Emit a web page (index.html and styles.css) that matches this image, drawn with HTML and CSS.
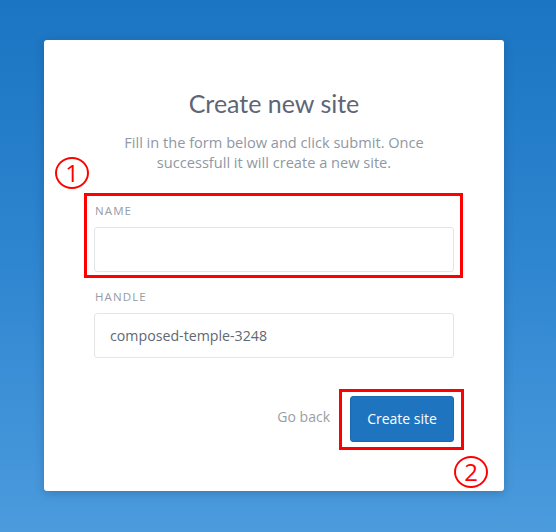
FILE: index.html
```html
<!DOCTYPE html>
<html lang="en">
<head>
<meta charset="utf-8">
<title>Create new site</title>
<link rel="stylesheet" href="styles.css">
</head>
<body>
<div class="page">
  <div class="card">
    <h1 class="title">Create new site</h1>
    <p class="intro">Fill in the form below and click submit. Once<br>successfull it will create a new site.</p>
    <div class="field field-name">
      <label class="label">NAME</label>
      <div class="input"></div>
      <span class="mark mark-name"></span>
      <span class="badge badge-1">1</span>
    </div>
    <div class="field">
      <label class="label">HANDLE</label>
      <div class="input">composed-temple-3248</div>
    </div>
    <div class="actions">
      <span class="back">Go back</span>
      <span class="submit-wrap">
        <span class="btn">Create site</span>
        <span class="mark mark-btn"></span>
        <span class="badge badge-2">2</span>
      </span>
    </div>
  </div>
</div>
</body>
</html>
```
FILE: styles.css
```css
html, body {
  margin: 0;
  padding: 0;
}
body {
  width: 556px;
  height: 532px;
  background: linear-gradient(180deg, #1b75c2 0%, #2f86d0 50%, #4b9bdd 100%);
  font-family: "Open Sans", "Liberation Sans", sans-serif;
  overflow: hidden;
}
.page {
  padding: 40px 52px 0 44px;
}
.card {
  width: 460px;
  height: 451px;
  box-sizing: border-box;
  background: #fff;
  border-radius: 3px;
  box-shadow: 0 2px 10px rgba(10, 40, 80, 0.25);
  padding: 48px 50px 0 50px;
}
.title {
  margin: 0;
  font-family: "Lato", "Open Sans", sans-serif;
  font-weight: 400;
  font-size: 25px;
  line-height: 30px;
  color: #5d6675;
  text-align: center;
}
.intro {
  margin: 14px -10px 0 -10px;
  font-size: 14.6px;
  line-height: 20px;
  color: #8f98a3;
  text-align: center;
}
.field {
  position: relative;
}
.field-name {
  margin-top: 31px;
}
.field + .field {
  margin-top: 17px;
}
.label {
  display: block;
  font-size: 11.5px;
  line-height: 16px;
  letter-spacing: 1.1px;
  color: #959ca6;
  padding-left: 1px;
}
.input {
  margin-top: 8px;
  height: 45px;
  box-sizing: border-box;
  border: 1px solid #e3e5e8;
  border-radius: 3px;
  padding: 0 15px;
  font-size: 14.2px;
  line-height: 43px;
  color: #5f6874;
}
.actions {
  margin-top: 38px;
  display: flex;
  justify-content: flex-end;
  align-items: center;
  gap: 20px;
}
.back {
  font-size: 14px;
  color: #9a9ea4;
  margin-bottom: 6px;
}
.submit-wrap {
  position: relative;
  display: block;
}
.btn {
  display: block;
  width: 104px;
  height: 46px;
  box-sizing: border-box;
  background: #1f74bf;
  border: 1px solid #1b6aae;
  border-radius: 3px;
  color: #fff;
  font-size: 14px;
  line-height: 44px;
  text-align: center;
}
.mark {
  position: absolute;
  border: 3px solid #ff0000;
  pointer-events: none;
}
.mark-name {
  top: -10px;
  left: -10px;
  right: -9px;
  bottom: -6px;
}
.mark-btn {
  top: -7px;
  left: -11px;
  right: -10px;
  bottom: -8px;
}
.badge {
  position: absolute;
  width: 34px;
  height: 32px;
  box-sizing: border-box;
  border: 2px solid #ff0000;
  border-radius: 50%;
  color: #ff0000;
  font-family: "Open Sans", sans-serif;
  font-size: 24px;
  line-height: 28px;
  text-align: center;
}
.badge-1 {
  top: -46px;
  left: -39px;
}
.badge-2 {
  top: 60px;
  left: 104px;
}
```
